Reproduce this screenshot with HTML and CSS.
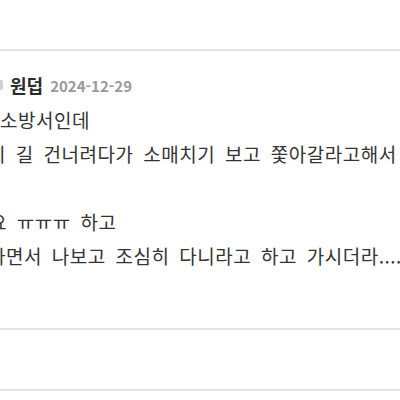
FILE: index.html
```html
<!DOCTYPE html>
<html lang="ko">
<head>
    <meta charset="UTF-8">
    <meta name="viewport" content="width=device-width, initial-scale=1.0">
    <title>댓글</title>
    <link rel="stylesheet" href="styles.css">
</head>
<body>
    <div class="top-space"></div>
    <div class="comment">
        <div class="comment-head">
            <span class="level-icon"></span>
            <span class="nick">원덥</span>
            <span class="date">2024-12-29</span>
        </div>
        <div class="comment-body">
            <div class="line">소방서인데</div>
            <div class="line cut-2">기 길 건너려다가 소매치기 보고 쫓아갈라고해서</div>
            <div class="line empty"></div>
            <div class="line cut-4">아요 ㅠㅠㅠ 하고</div>
            <div class="line cut-5">하면서 나보고 조심히 다니라고 하고 가시더라....</div>
        </div>
    </div>
    <div class="reply-box"></div>
    <div class="bottom-space"></div>
</body>
</html>
```

FILE: styles.css
```css
body {
    margin: 0;
    width: 400px;
    height: 400px;
    overflow: hidden;
    background-color: #ffffff;
    font-family: "Noto Sans CJK KR", "Noto Sans", sans-serif;
    color: #333333;
}

.top-space {
    height: 49px;
}

.comment {
    border-top: 2px solid #e2e2e2;
    height: 279px;
    padding-top: 19px;
    box-sizing: border-box;
    overflow: hidden;
}

.comment-head {
    display: flex;
    align-items: center;
    gap: 7px;
    height: 30px;
}

.level-icon {
    width: 10px;
    height: 10px;
    margin-left: -7px;
    background-color: #d0d0d0;
    border-radius: 2px;
}

.nick {
    font-size: 18px;
    font-weight: bold;
    color: #2b2b2b;
}

.date {
    font-size: 15px;
    font-weight: bold;
    color: #9a9a9a;
}

.comment-body {
    margin-top: 3px;
    font-size: 19px;
    letter-spacing: 0.5px;
    word-spacing: 4px;
}

.line {
    height: 34px;
    line-height: 34px;
    white-space: nowrap;
}

.cut-2 {
    margin-left: -12px;
}

.cut-4 {
    margin-left: -29px;
}

.cut-5 {
    margin-left: -12px;
}

.reply-box {
    border-top: 2px solid #e2e2e2;
    height: 59px;
}

.bottom-space {
    border-top: 2px solid #e2e2e2;
}
```
